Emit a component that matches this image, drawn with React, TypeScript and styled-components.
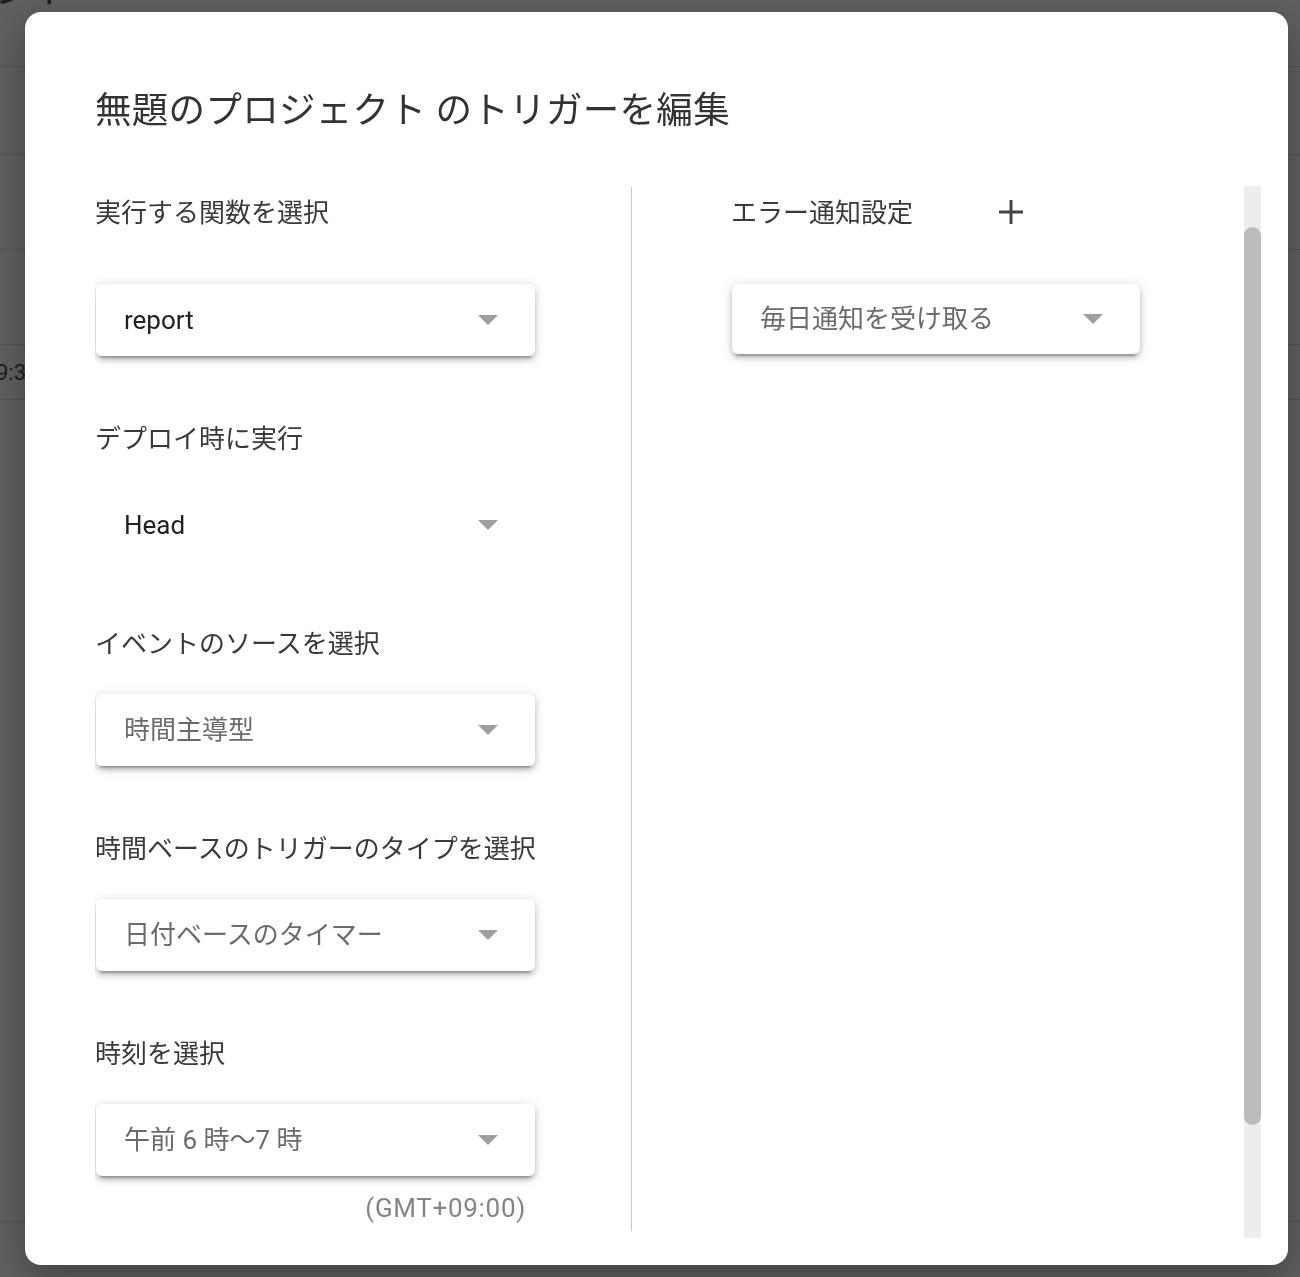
import React from "react";
import styled, { createGlobalStyle } from "styled-components";

const Global = createGlobalStyle`
  html, body { margin: 0; padding: 0; }
  body {
    background: #5f5f5f;
    font-family: Roboto, "Noto Sans CJK JP", sans-serif;
    overflow: hidden;
  }
`;

const Page = styled.div`
  height: 1277px;
  display: flex;
  flex-direction: column;
  overflow: hidden;
`;

const PageRow = styled.div<{ $h: number }>`
  height: ${(p) => p.$h}px;
  flex-shrink: 0;
  box-sizing: border-box;
  border-bottom: 1px solid #525252;
  display: flex;
  align-items: center;
  color: #1e1e1e;
`;

const PageTitle = styled.div`
  align-self: flex-start;
  margin: -32px 0 0 -6px;
  font-size: 40px;
  line-height: 44px;
  color: #1e1e1e;
`;

const PageCell = styled.div`
  margin-left: -4px;
  font-size: 22px;
  color: #1e1e1e;
`;

const Dialog = styled.div`
  position: fixed;
  left: 25px;
  top: 12px;
  width: 1263px;
  height: 1253px;
  box-sizing: border-box;
  padding: 77px 27px 27px 70px;
  background: #fff;
  border-radius: 16px;
  box-shadow: 0 12px 34px rgba(0, 0, 0, 0.3);
  display: flex;
  flex-direction: column;
`;

const Title = styled.h2`
  margin: 0;
  font-size: 36.5px;
  letter-spacing: 0.3px;
  line-height: 44px;
  font-weight: 400;
  color: #333;
`;

const Body = styled.div`
  margin-top: 53px;
  flex: 1;
  min-height: 0;
  display: flex;
  overflow: hidden;
`;

const Content = styled.div`
  flex: 1;
  display: flex;
  align-items: flex-start;
`;

const ScrollTrack = styled.div`
  width: 17px;
  flex-shrink: 0;
  background: #ededed;
  display: flex;
  flex-direction: column;
`;

const ScrollThumb = styled.div`
  margin-top: 41px;
  height: 898px;
  background: #bcbcbc;
  border-radius: 9px;
`;

const LeftColumn = styled.div`
  width: 537px;
  height: 1044px;
  margin-top: 1px;
  box-sizing: border-box;
  padding-top: 6px;
  border-right: 1px solid #c8c8c8;
  display: flex;
  flex-direction: column;
`;

const RightColumn = styled.div`
  padding: 7px 0 0 99px;
  display: flex;
  flex-direction: column;
`;

const Field = styled.div<{ $first?: boolean }>`
  display: flex;
  flex-direction: column;
  margin-top: ${(p) => (p.$first ? 0 : 63)}px;
`;

const Label = styled.div<{ $first?: boolean }>`
  font-size: 26px;
  line-height: 36px;
  color: #3a3a3a;
  padding-top: 2px;
  margin-bottom: ${(p) => (p.$first ? 53 : 32)}px;
`;

const RowLabel = styled.div`
  font-size: 26px;
  line-height: 36px;
  padding-top: 2px;
  color: #3a3a3a;
`;

const LabelRow = styled.div`
  display: flex;
  align-items: center;
  margin-bottom: 53px;
`;

const AddButton = styled.button`
  width: 36px;
  height: 36px;
  margin-left: 80px;
  padding: 0;
  border: none;
  background: none;
  display: flex;
  align-items: center;
  justify-content: center;
  cursor: pointer;
`;

const Select = styled.div<{ $w: number; $h?: number; $flat?: boolean }>`
  width: ${(p) => p.$w}px;
  height: ${(p) => p.$h ?? 72}px;
  margin-left: 1px;
  box-sizing: border-box;
  padding: 0 37px 0 28px;
  display: flex;
  align-items: center;
  justify-content: space-between;
  background: #fff;
  border-radius: 6px;
  box-shadow: ${(p) =>
    p.$flat
      ? "none"
      : "0 6px 2px -4px rgba(0,0,0,.22), 0 4px 5px rgba(0,0,0,.17), 0 2px 12px rgba(0,0,0,.17)"};
`;

const Value = styled.span<{ $muted?: boolean }>`
  font-size: 26px;
  line-height: 36px;
  color: ${(p) => (p.$muted ? "#6b6b6b" : "#222")};
`;

const Arrow = styled.span`
  width: 0;
  height: 0;
  border-left: 10px solid transparent;
  border-right: 10px solid transparent;
  border-top: 10px solid #9e9e9e;
`;

const Zone = styled.div`
  width: 431px;
  margin-top: 14px;
  text-align: right;
  font-size: 26px;
  letter-spacing: 0.7px;
  line-height: 36px;
  color: #858585;
`;

type Opt = { label: string; value: string; muted?: boolean; flat?: boolean };

const fields: Opt[] = [
  { label: "実行する関数を選択", value: "report" },
  { label: "デプロイ時に実行", value: "Head", flat: true },
  { label: "イベントのソースを選択", value: "時間主導型", muted: true },
  { label: "時間ベースのトリガーのタイプを選択", value: "日付ベースのタイマー", muted: true },
  { label: "時刻を選択", value: "午前 6 時〜7 時", muted: true },
];

export default function App() {
  return (
    <>
      <Global />
      <Page>
        <PageRow $h={67}>
          <PageTitle>ント</PageTitle>
        </PageRow>
        <PageRow $h={88} />
        <PageRow $h={95} />
        <PageRow $h={95} />
        <PageRow $h={55}>
          <PageCell>9:30</PageCell>
        </PageRow>
        <PageRow $h={822} />
      </Page>
      <Dialog role="dialog">
        <Title>無題のプロジェクト のトリガーを編集</Title>
        <Body>
          <Content>
            <LeftColumn>
              {fields.map((f, i) => (
                <Field key={f.label} $first={i === 0}>
                  <Label $first={i === 0}>{f.label}</Label>
                  <Select $w={439} $flat={f.flat}>
                    <Value $muted={f.muted}>{f.value}</Value>
                    <Arrow />
                  </Select>
                </Field>
              ))}
              <Zone>(GMT+09:00)</Zone>
            </LeftColumn>
            <RightColumn>
              <LabelRow>
                <RowLabel>エラー通知設定</RowLabel>
                <AddButton aria-label="追加">
                  <svg width="26" height="26" viewBox="0 0 26 26">
                    <path d="M13 1v24M1 13h24" stroke="#444" strokeWidth="3" fill="none" />
                  </svg>
                </AddButton>
              </LabelRow>
              <Select $w={408} $h={70}>
                <Value $muted>毎日通知を受け取る</Value>
                <Arrow />
              </Select>
            </RightColumn>
          </Content>
          <ScrollTrack>
            <ScrollThumb />
          </ScrollTrack>
        </Body>
      </Dialog>
    </>
  );
}
